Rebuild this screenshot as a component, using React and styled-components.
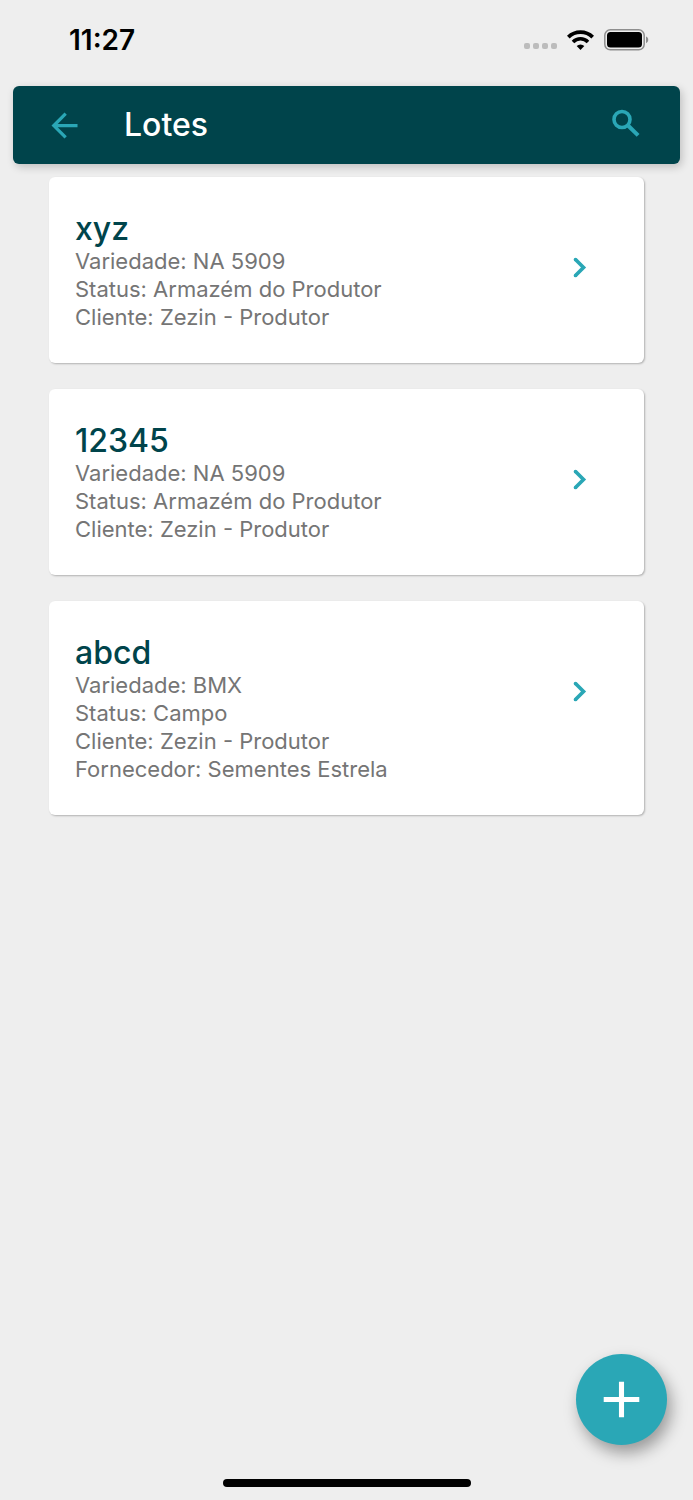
import React from "react";
import styled, { createGlobalStyle } from "styled-components";
import { MdAdd, MdArrowBack } from "react-icons/md";

const lots = [
  {
    id: "xyz",
    details: [
      "Variedade: NA 5909",
      "Status: Armazém do Produtor",
      "Cliente: Zezin - Produtor",
    ],
  },
  {
    id: "12345",
    details: [
      "Variedade: NA 5909",
      "Status: Armazém do Produtor",
      "Cliente: Zezin - Produtor",
    ],
  },
  {
    id: "abcd",
    details: [
      "Variedade: BMX",
      "Status: Campo",
      "Cliente: Zezin - Produtor",
      "Fornecedor: Sementes Estrela",
    ],
  },
];

const App = () => {
  return (
    <Screen>
      <GlobalStyle />
      <StatusBar>
        <Time>11:27</Time>
        <Indicators>
          <Signal>
            <span />
            <span />
            <span />
            <span />
          </Signal>
          <WifiIcon />
          <BatteryIcon />
        </Indicators>
      </StatusBar>
      <Header>
        <IconButton aria-label="Voltar">
          <MdArrowBack size={39} />
        </IconButton>
        <h1>Lotes</h1>
        <IconButton aria-label="Buscar">
          <SearchIcon />
        </IconButton>
      </Header>
      <List>
        {lots.map((lot) => (
          <li key={lot.id}>
            <Card href={`#${lot.id}`}>
              <div>
                <CardTitle>{lot.id}</CardTitle>
                {lot.details.map((line) => (
                  <Detail key={line}>{line}</Detail>
                ))}
              </div>
              <ChevronIcon />
            </Card>
          </li>
        ))}
      </List>
      <AddButton aria-label="Adicionar">
        <MdAdd size={61} />
      </AddButton>
      <HomeIndicator />
    </Screen>
  );
};

const WifiIcon = () => (
  <svg width="27" height="20" viewBox="0 0 27 20" fill="none" aria-hidden="true">
    <path d="M1.3 7.1a17.3 17.3 0 0 1 24.4 0" stroke="#000" strokeWidth="3.8" />
    <path d="M6 11.9a10.6 10.6 0 0 1 15 0" stroke="#000" strokeWidth="3.6" />
    <path d="M13.5 20l-3.8-4a5.5 5.5 0 0 1 7.6 0z" fill="#000" />
  </svg>
);

const BatteryIcon = () => (
  <svg width="45" height="22" viewBox="0 0 45 22" fill="none" aria-hidden="true">
    <rect x="0.8" y="0.8" width="39.4" height="20" rx="5.5" stroke="#8e8e8e" strokeWidth="1.5" />
    <rect x="3" y="3" width="35" height="15.6" rx="3.5" fill="#000" />
    <path d="M42 7.600c3 1 3 5.600 0 6.600z" fill="#8e8e8e" />
  </svg>
);

const SearchIcon = () => (
  <svg width="39" height="39" viewBox="0 0 39 39" fill="none" aria-hidden="true">
    <circle cx="15" cy="13.5" r="8" stroke="currentColor" strokeWidth="3.6" />
    <path d="M20.500 19l10.600 10.400" stroke="currentColor" strokeWidth="4" />
  </svg>
);

const ChevronIcon = () => (
  <svg width="39" height="39" viewBox="0 0 39 39" fill="none" aria-hidden="true">
    <path d="M15.500 11.500l8 8-8 8" stroke="currentColor" strokeWidth="3.700" />
    <path d="M15.500 11.500h0M15.500 27.500h0" stroke="currentColor" strokeWidth="3.700" strokeLinecap="round" />
  </svg>
);

const GlobalStyle = createGlobalStyle`
  * {
    box-sizing: border-box;
  }
  body {
    margin: 0;
    background-color: #eeeeee;
    font-family: Inter, "Liberation Sans", sans-serif;
  }
`;

const Screen = styled.div`
  min-height: 100vh;
  padding-bottom: 160px;
`;

const StatusBar = styled.div`
  display: flex;
  align-items: center;
  justify-content: space-between;
  height: 86px;
  padding: 0 44px 6px 69px;
`;

const Time = styled.span`
  font-size: 28px;
  font-weight: 600;
  line-height: 32px;
  color: #000;
`;

const Indicators = styled.div`
  display: flex;
  align-items: center;
  gap: 10px;
`;

const Signal = styled.div`
  display: flex;
  align-self: flex-end;
  gap: 3px;
  padding-bottom: 2px;
  span {
    width: 6px;
    height: 6px;
    border-radius: 2px;
    background-color: #bcbcbc;
  }
`;

const Header = styled.header`
  display: flex;
  align-items: center;
  height: 78px;
  margin: 0 13px;
  padding: 0 34px 0 32px;
  border-radius: 6px;
  background-color: #00444b;
  box-shadow: 2px 3px 8px rgba(0, 0, 0, 0.2);
  h1 {
    flex: 1;
    margin: 0 40px;
    color: #fff;
    font-size: 32px;
    font-weight: 500;
    line-height: 38px;
  }
`;

const IconButton = styled.button`
  display: flex;
  padding: 0;
  border: 0;
  background: none;
  color: #2aa7b6;
  cursor: pointer;
`;

const List = styled.ul`
  display: flex;
  flex-direction: column;
  gap: 26px;
  margin: 13px 49px 0;
  padding: 0;
  list-style: none;
`;

const Card = styled.a`
  display: flex;
  justify-content: space-between;
  padding: 34px 45px 32px 26px;
  border-radius: 6px;
  background-color: #fff;
  box-shadow: 1px 1px 2px rgba(0, 0, 0, 0.26);
  color: #2aa7b6;
  text-decoration: none;
  svg {
    flex-shrink: 0;
    margin-top: 37px;
  }
`;

const CardTitle = styled.h2`
  margin: 0;
  color: #00444b;
  font-size: 32px;
  font-weight: 500;
  line-height: 36px;
`;

const Detail = styled.p`
  margin: 0;
  color: #757575;
  font-size: 22px;
  line-height: 28px;
`;

const AddButton = styled.button`
  position: fixed;
  right: 26px;
  bottom: 55px;
  display: flex;
  align-items: center;
  justify-content: center;
  width: 91px;
  height: 91px;
  padding: 0;
  border: 0;
  border-radius: 50%;
  background-color: #2aa7b6;
  box-shadow: 4px 8px 16px rgba(0, 0, 0, 0.36);
  color: #fff;
  cursor: pointer;
`;

const HomeIndicator = styled.div`
  position: fixed;
  bottom: 13px;
  left: 50%;
  width: 248px;
  height: 8px;
  margin-left: -124px;
  border-radius: 4px;
  background-color: #000;
`;

export default App;
